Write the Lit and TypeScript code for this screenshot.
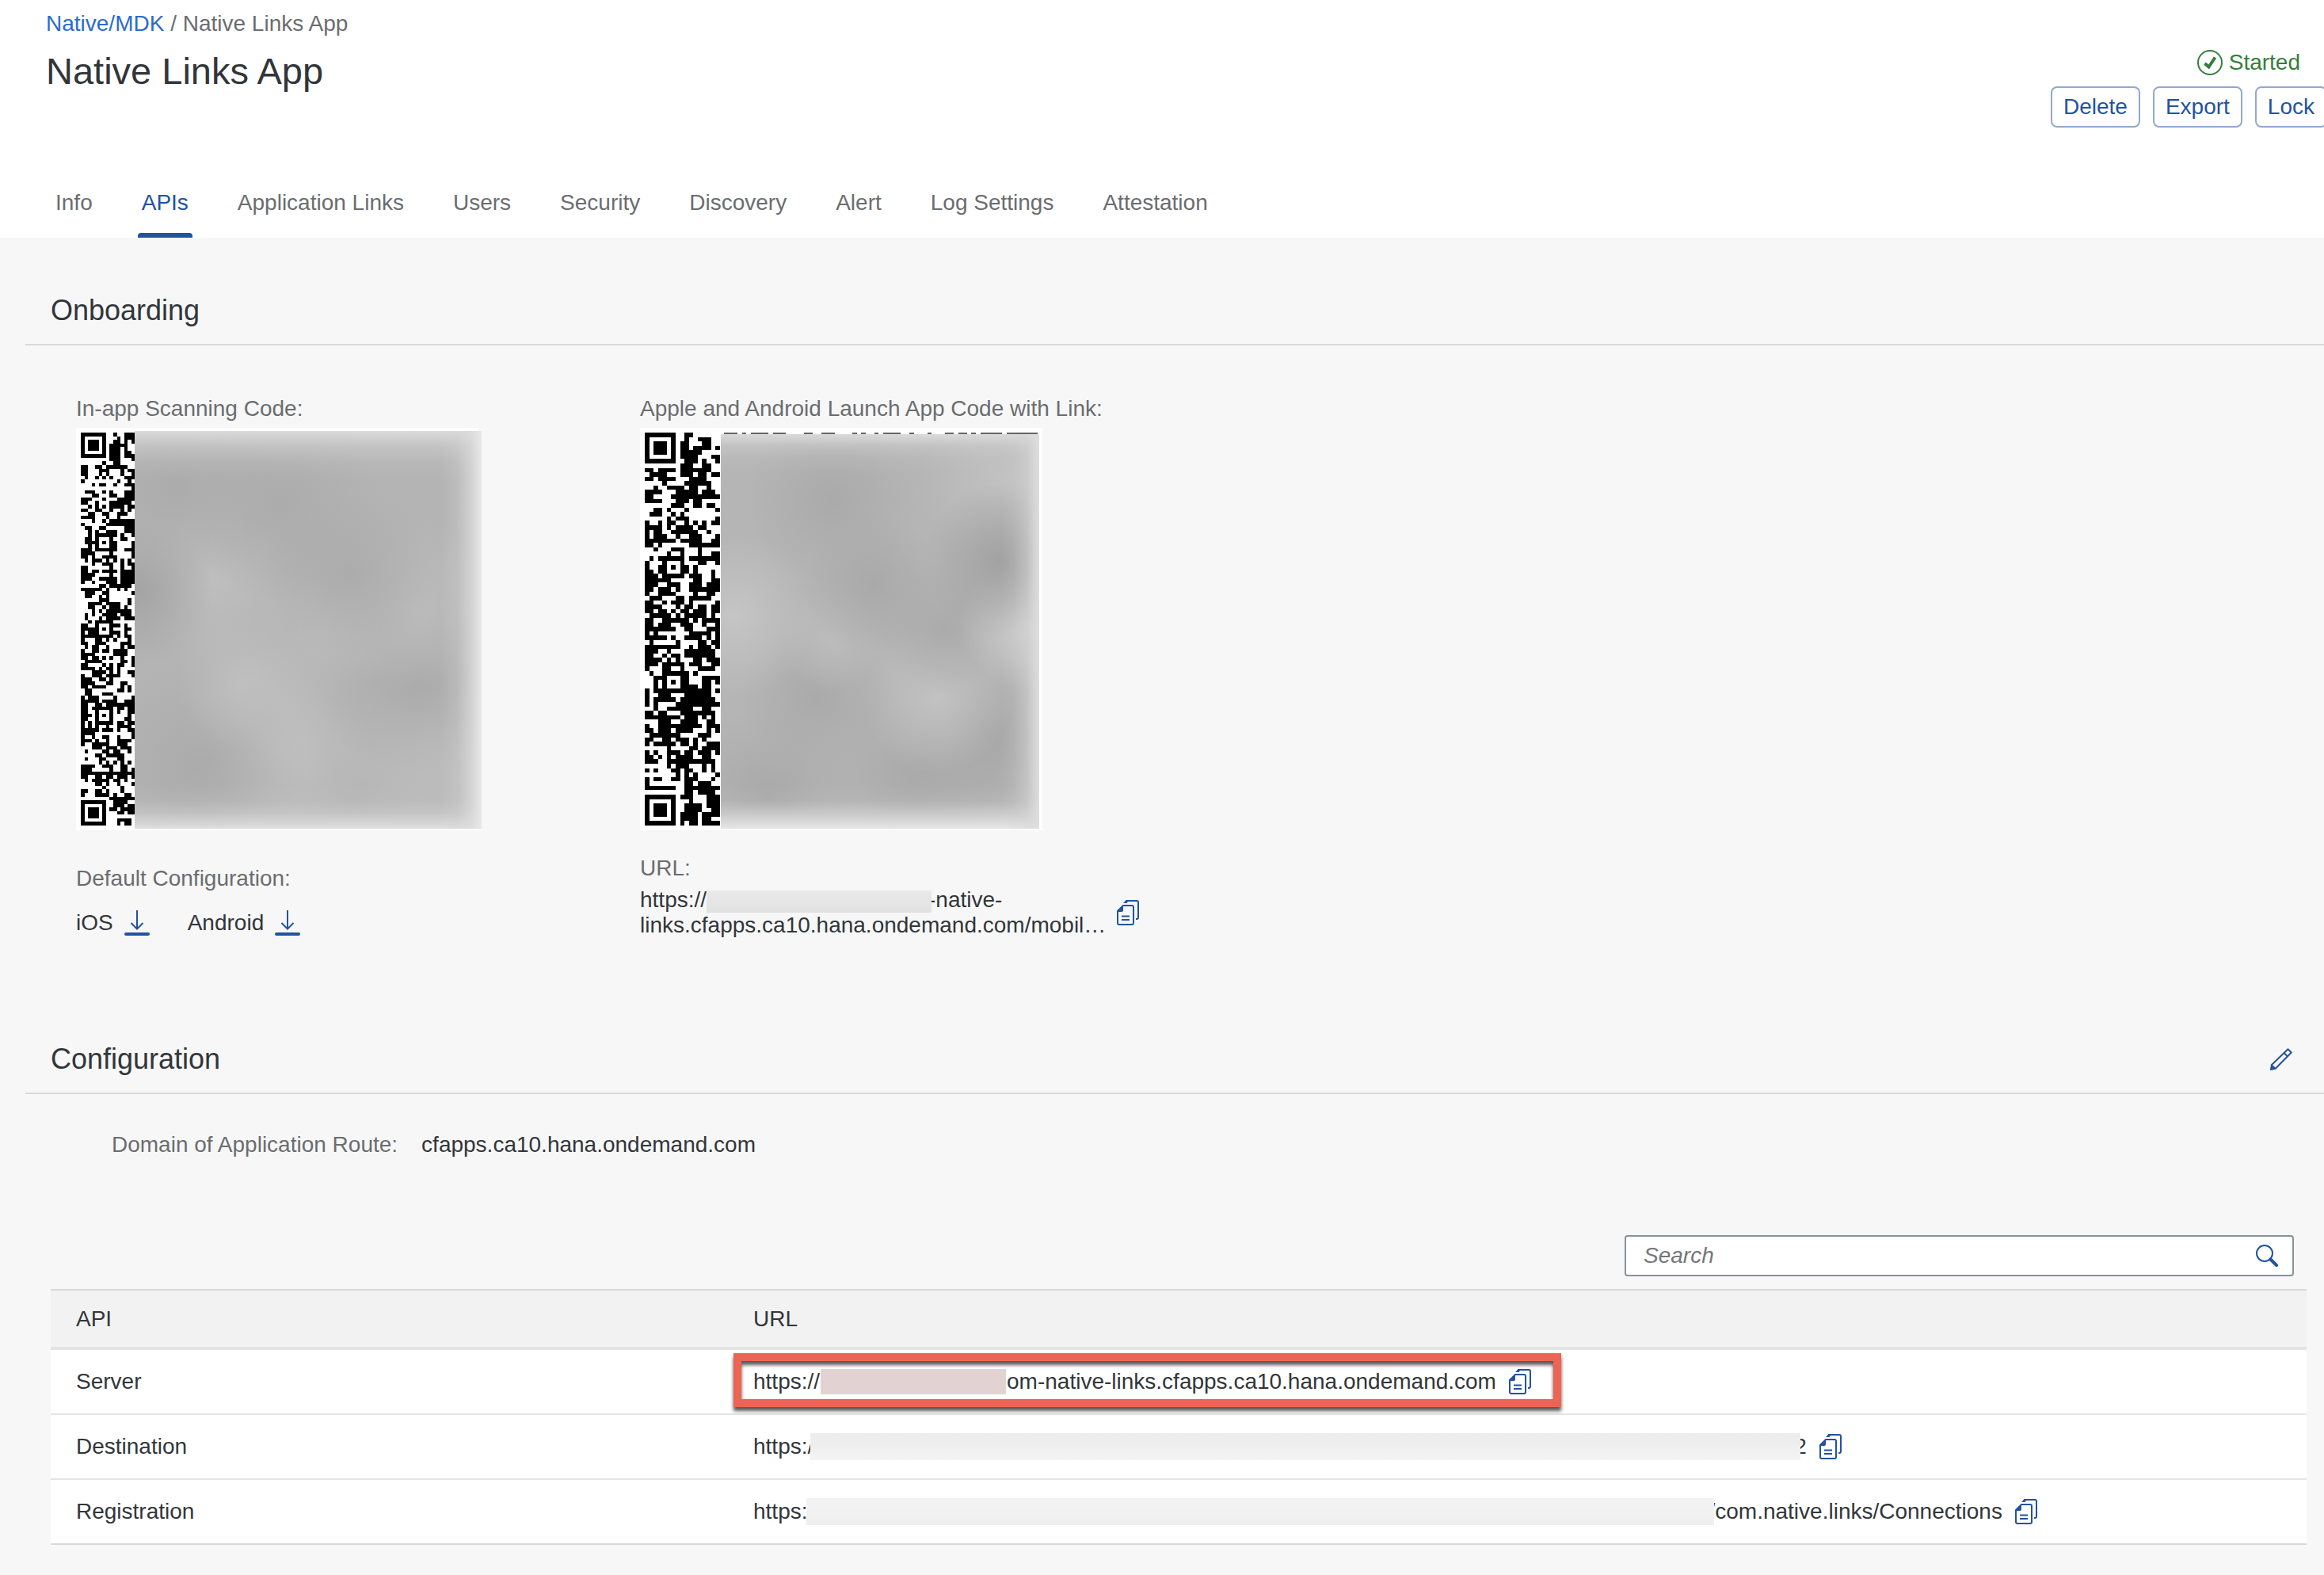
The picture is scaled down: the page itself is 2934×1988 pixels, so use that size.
import { LitElement, html, css, svg } from "lit";
import { customElement, property } from "lit/decorators.js";
import { classMap } from "lit/directives/class-map.js";

const copyIcon = html`<svg class="icon" width="28" height="32" viewBox="0 0 28 32" aria-hidden="true">
  <path d="M3 31h16a2 2 0 0 0 2-2V9a2 2 0 0 0-2-2H8l-7 7v15a2 2 0 0 0 2 2z" fill="none" stroke="currentColor" stroke-width="2"/>
  <path d="M1 15V14L8 6.500V13a2 2 0 0 1-2 2z" fill="currentColor"/>
  <path d="M6 20.500h10M6 25h10" stroke="currentColor" stroke-width="2"/>
  <path d="M11 2 12 1h13a2 2 0 0 1 2 2v19a2 2 0 0 1-2 2h-1" fill="none" stroke="currentColor" stroke-width="2"/>
  <path d="M8 4l4-4 2 2-1.500 2z" fill="currentColor"/>
</svg>`;

const downloadIcon = html`<svg class="icon" width="32" height="32" viewBox="0 0 32 32" aria-hidden="true">
  <path d="M16 0v23M8.500 16 16 23.500 23.500 16" fill="none" stroke="currentColor" stroke-width="2"/>
  <rect x="0" y="28" width="32" height="4" rx="2" fill="currentColor"/>
</svg>`;

const pencilIcon = html`<svg class="icon" width="28" height="28" viewBox="0 0 28 28" aria-hidden="true">
  <path d="M2 21 22.500 1.200 26.800 5.500 7 25.500 1.200 26.800z" fill="none" stroke="currentColor" stroke-width="2" stroke-linejoin="round"/>
  <path d="M17.500 6 22 10.500" stroke="currentColor" stroke-width="2"/>
  <path d="M0 28 1.500 20.500 4 22l2 2 1.500 2.500z" fill="currentColor"/>
</svg>`;

const searchIcon = html`<svg class="icon" width="28" height="28" viewBox="0 0 28 28" aria-hidden="true">
  <circle cx="11" cy="11" r="10" fill="none" stroke="currentColor" stroke-width="2"/>
  <path d="M18.500 18.500 26 26" stroke="currentColor" stroke-width="4" stroke-linecap="round"/>
</svg>`;

const startedIcon = html`<svg class="icon" width="32" height="32" viewBox="0 0 32 32" aria-hidden="true">
  <circle cx="16" cy="16" r="15" fill="none" stroke="currentColor" stroke-width="2"/>
  <path d="M9.500 17 14.500 21.500 22.500 9.500" fill="none" stroke="currentColor" stroke-width="4"/>
</svg>`;

/* Draws the left-hand columns of a QR symbol as one path. */
function qrPath(size: number, cols: number, centres: number[], seed: number): string {
  let state = seed;
  const next = () => {
    state = (Math.imul(state, 1664525) + 1013904223) >>> 0;
    return state / 4294967296;
  };
  const noise: boolean[][] = [];
  let d = "";
  for (let r = 0; r < size; r++) {
    noise.push([]);
    for (let c = 0; c < cols; c++) {
      const pick = next();
      let dark = next() < 0.52;
      if (pick < 0.16 && c > 0) dark = noise[r][c - 1];
      else if (pick < 0.34 && r > 0) dark = noise[r - 1][c];
      noise[r].push(dark);
      const fr = r < 8 ? r : r >= size - 8 ? size - 1 - r : -1;
      if (fr >= 0 && c < 8) {
        const ring = Math.max(Math.abs(fr - 3), Math.abs(c - 3));
        dark = ring !== 2 && ring !== 4;
      } else {
        if (c === 6) dark = r % 2 === 0;
        const centre = centres.find((y) => Math.abs(y - r) <= 2);
        if (centre !== undefined && Math.abs(c - 6) <= 2) {
          dark = Math.max(Math.abs(centre - r), Math.abs(c - 6)) !== 1;
        }
      }
      if (dark) d += `M${c} ${r}h1v1h-1z`;
    }
  }
  return d;
}

@customElement("qr-code")
class QrCode extends LitElement {
  @property({ type: Number }) size = 109;
  @property({ type: Number }) cols = 15;
  @property({ type: Number }) seed = 7;
  @property({ attribute: false }) centres: number[] = [];
  @property({ attribute: false }) topRuns: number[][] = [];

  static styles = css`
    :host { display: block; background: #fff; width: 508px; height: 508px; padding: 6px; box-sizing: border-box; }
    .symbol { display: block; width: 100%; height: 100%; }
  `;

  render() {
    return html`<svg class="symbol" viewBox="0 0 ${this.size} ${this.size}" shape-rendering="crispEdges" role="img" aria-label="QR code">
      <path d=${qrPath(this.size, this.cols, this.centres, this.seed)} fill="#000"/>
      ${this.topRuns.map(([x, w]) => svg`<rect x=${x} y="0" width=${w} height="1" fill="#666"/>`)}
    </svg>`;
  }
}

@customElement("app-root")
class AppRoot extends LitElement {
  static styles = css`
    :host {
      display: block;
      min-height: 100vh;
      overflow-x: hidden;
      background: #f7f7f7;
      color: #32363a;
      font: 28px/32px "Liberation Sans", Arial, sans-serif;
    }
    * { box-sizing: border-box; }
    h1, h2, p, dl, dd { margin: 0; font-weight: 400; }
    a { color: #22539f; text-decoration: none; }
    button { font: inherit; color: #22539f; background: none; border: 0; padding: 0; display: block; flex: none; }
    .icon { display: block; flex: none; }
    .label { color: #6a6d70; }

    .header { background: #fff; }
    .top { display: flex; justify-content: space-between; padding: 14px 0 0 58px; }
    .crumbs { color: #6a6d70; }
    .crumbs a { color: #2b6bcf; }
    .title { font-size: 47px; line-height: 56px; margin-top: 16px; }
    .side { padding-top: 49px; margin-right: -4px; }
    .status { display: flex; justify-content: flex-end; align-items: center; gap: 8px; color: #357e3c; padding-right: 34px; }
    .actions { display: flex; gap: 16px; margin-top: 14px; }
    .action { height: 52px; padding: 0 14px; border: 2px solid #91a9cf; border-radius: 8px; }
    .tabs { display: flex; gap: 48px; padding: 79px 0 0 63px; }
    .tab { color: #6a6d70; padding: 0 7px; }
    .tab::after { content: ""; display: block; height: 6px; margin: 22px -5px 0; border-radius: 4px 4px 0 0; }
    .current { color: #22539f; }
    .current::after { background: #22539f; }

    .heading { display: flex; justify-content: space-between; align-items: center; margin-left: 32px; padding: 70px 40px 20px 32px; border-bottom: 2px solid #d9d9d9; }
    .heading h2 { font-size: 36px; line-height: 44px; }
    .config { margin-top: 61px; }

    .onboarding { display: grid; grid-template-columns: 712px 1fr; padding: 64px 96px 0; }
    .code { position: relative; width: 508px; margin-top: 8px; }
    .smudge {
      position: absolute;
      background:
        linear-gradient(to left, #e8e8e8, rgba(222, 222, 222, 0.7) 3%, rgba(215, 215, 215, 0.25) 7%, rgba(210, 210, 210, 0) 12%),
        linear-gradient(to bottom, #dadada, rgba(210, 210, 210, 0.5) 4%, rgba(205, 205, 205, 0.15) 8%, rgba(200, 200, 200, 0) 12%),
        linear-gradient(to top, #dedede, rgba(210, 210, 210, 0.5) 4%, rgba(205, 205, 205, 0.15) 7%, rgba(200, 200, 200, 0) 11%),
        radial-gradient(circle at 12% 14%, #acacac, transparent 22%),
        radial-gradient(circle at 42% 18%, #acacac, transparent 26%),
        radial-gradient(circle at 62% 36%, #acacac, transparent 26%),
        radial-gradient(circle at 1% 40%, #a4a4a4, transparent 18%),
        radial-gradient(circle at 22% 36%, #bfbfbf, transparent 24%),
        radial-gradient(circle at 55% 49%, #bcbcbc, transparent 26%),
        radial-gradient(circle at 80% 44%, #bcbcbc, transparent 24%),
        radial-gradient(circle at 32% 63%, #bfbfbf, transparent 20%),
        radial-gradient(circle at 82% 62%, #aaaaaa, transparent 28%),
        radial-gradient(circle at 86% 78%, #c0c0c0, transparent 24%),
        radial-gradient(circle at 19% 84%, #ababab, transparent 24%),
        radial-gradient(circle at 40% 80%, #c2c2c2, transparent 26%),
        #b4b4b4;
    }
    .smudge.first { left: 74px; right: -4px; top: 4px; bottom: 2px; }
    .smudge.second {
      left: 102px; right: 4px; top: 8px; bottom: 2px;
      background:
        linear-gradient(to left, #dedede, rgba(215, 215, 215, 0.45) 4%, rgba(210, 210, 210, 0.15) 8%, rgba(205, 205, 205, 0) 12%),
        linear-gradient(to bottom, #dadada, rgba(210, 210, 210, 0.45) 3%, rgba(205, 205, 205, 0.15) 6%, rgba(200, 200, 200, 0) 10%),
        linear-gradient(to top, #e6e6e6, rgba(215, 215, 215, 0.6) 4%, rgba(205, 205, 205, 0.15) 7%, rgba(200, 200, 200, 0) 11%),
        radial-gradient(circle at 35% 17%, #aaaaaa, transparent 22%),
        radial-gradient(circle at 88% 32%, #a2a2a2, transparent 20%),
        radial-gradient(circle at 96% 48%, #cecece, transparent 18%),
        radial-gradient(circle at 90% 12%, #c2c2c2, transparent 20%),
        radial-gradient(circle at 48% 38%, #a9a9a9, transparent 24%),
        radial-gradient(circle at 70% 49%, #ababab, transparent 22%),
        radial-gradient(circle at 4% 46%, #c5c5c5, transparent 22%),
        radial-gradient(circle at 35% 52%, #bcbcbc, transparent 18%),
        radial-gradient(circle at 30% 67%, #aaaaaa, transparent 22%),
        radial-gradient(circle at 68% 67%, #c2c2c2, transparent 22%),
        radial-gradient(circle at 84% 76%, #a7a7a7, transparent 20%),
        radial-gradient(circle at 15% 92%, #a9a9a9, transparent 20%),
        radial-gradient(circle at 62% 86%, #aaaaaa, transparent 26%),
        #b5b5b5;
    }
    .default { margin-top: 45px; }
    .downloads { display: flex; align-items: center; gap: 48px; margin-top: 24px; }
    .download { display: flex; gap: 14px; }
    .link-label { margin-top: 32px; }
    .link { display: flex; align-items: center; gap: 14px; margin-top: 8px; white-space: nowrap; }
    .hidden { display: inline-block; vertical-align: top; position: relative; height: 28px; margin: 4px -4px 0 0; width: 284px; background: linear-gradient(#e9e9e9, #e1e1e1); }

    .route { display: flex; gap: 30px; padding: 48px 0 0 141px; }
    .search { display: flex; align-items: center; width: 845px; max-width: 100%; height: 52px; margin: 98px 38px 16px auto; padding: 0 18px 0 22px; background: #fff; border: 2px solid #89919a; border-radius: 4px; }
    .search input { flex: 1; min-width: 0; border: 0; outline: 0; padding: 0; background: none; font: inherit; color: #32363a; }
    .search input::placeholder { color: #74777a; font-style: italic; opacity: 1; }

    .table-area { padding: 0 22px 32px 64px; }
    table { width: 100%; border-collapse: separate; border-spacing: 0; background: #fff; }
    th, td { text-align: left; font-weight: 400; padding: 0 32px; vertical-align: middle; }
    th { height: 77px; background: #f2f2f2; border-top: 2px solid #d9d9d9; border-bottom: 4px solid #e4e4e4; }
    th:first-child { width: 855px; }
    td { height: 82px; border-bottom: 2px solid #e5e5e5; }
    tbody tr:last-child td { border-bottom-color: #d9d9d9; }
    .url { display: flex; align-items: center; position: relative; width: max-content; white-space: nowrap; }
    .url button { margin-left: 16px; }
    .mask { position: relative; height: 34px; background: linear-gradient(#ececec, #f3f3f3); }
    .mask.server { width: 234px; height: 32px; margin: 0 1px; background: #e2d3d2; }
    .mask.destination { width: 1250px; margin: 0 -8px 0 -4px; }
    .mask.registration { width: 1146px; margin: 0 -7px 0 -1px; background: linear-gradient(#f3f3f3, #efefef); }
    .marker { position: absolute; top: -20px; bottom: -16px; left: -25px; right: -38px; border: 10px solid #ec6453; filter: drop-shadow(0 5px 2px rgba(0, 0, 0, 0.65)); pointer-events: none; }
  `;

  private tabs = ["Info", "APIs", "Application Links", "Users", "Security", "Discovery", "Alert", "Log Settings", "Attestation"];

  private rows = [
    { api: "Server", start: "https://", mask: "server", end: "om-native-links.cfapps.ca10.hana.ondemand.com", marked: true },
    { api: "Destination", start: "https:/", mask: "destination", end: "2", marked: false },
    { api: "Registration", start: "https:", mask: "registration", end: "/com.native.links/Connections", marked: false },
  ];

  render() {
    return html`
      <header class="header">
        <div class="top">
          <div>
            <nav class="crumbs" aria-label="Breadcrumb"><a href="#">Native/MDK</a> / Native Links App</nav>
            <h1 class="title">Native Links App</h1>
          </div>
          <div class="side">
            <div class="status">${startedIcon}<span>Started</span></div>
            <div class="actions">
              ${["Delete", "Export", "Lock"].map((t) => html`<button class="action" type="button">${t}</button>`)}
            </div>
          </div>
        </div>
        <nav class="tabs" aria-label="Sections">
          ${this.tabs.map((t) => html`<a href="#" class=${classMap({ tab: true, current: t === "APIs" })}>${t}</a>`)}
        </nav>
      </header>
      <main>
        <section>
          <div class="heading"><h2>Onboarding</h2></div>
          <div class="onboarding">
            <div>
              <p class="label">In-app Scanning Code:</p>
              <div class="code">
                <qr-code .size=${109} .cols=${15} .seed=${91} .centres=${[30, 54, 78]}></qr-code>
                <div class="smudge first"></div>
              </div>
              <p class="label default">Default Configuration:</p>
              <div class="downloads">
                <span class="download">iOS<a href="#" aria-label="Download iOS configuration">${downloadIcon}</a></span>
                <span class="download">Android<a href="#" aria-label="Download Android configuration">${downloadIcon}</a></span>
              </div>
            </div>
            <div>
              <p class="label">Apple and Android Launch App Code with Link:</p>
              <div class="code">
                <qr-code .size=${89} .cols=${17} .seed=${37} .centres=${[30, 56]}
                  .topRuns=${[[18, 3], [22, 1], [24, 4], [29, 3], [36, 2], [40, 3], [47, 1], [49, 1], [52, 1], [54, 4], [60, 1], [64, 1], [68, 2], [71, 2], [74, 1], [76, 5], [82, 7]]}></qr-code>
                <div class="smudge second"></div>
              </div>
              <p class="label link-label">URL:</p>
              <div class="link">
                <p>https://<span class="hidden"></span>-native-<br>links.cfapps.ca10.hana.ondemand.com/mobil…</p>
                <button type="button" aria-label="Copy link URL">${copyIcon}</button>
              </div>
            </div>
          </div>
        </section>
        <section class="config">
          <div class="heading">
            <h2>Configuration</h2>
            <button type="button" aria-label="Edit configuration">${pencilIcon}</button>
          </div>
          <dl class="route">
            <dt class="label">Domain of Application Route:</dt>
            <dd>cfapps.ca10.hana.ondemand.com</dd>
          </dl>
          <form class="search" role="search">
            <input type="text" placeholder="Search" aria-label="Search">
            <button type="button" aria-label="Run search">${searchIcon}</button>
          </form>
          <div class="table-area">
            <table>
              <thead><tr><th scope="col">API</th><th scope="col">URL</th></tr></thead>
              <tbody>
                ${this.rows.map((r) => html`<tr>
                  <td>${r.api}</td>
                  <td>
                    <div class="url">
                      <span>${r.start}</span><span class="mask ${r.mask}"></span><span>${r.end}</span>
                      <button type="button" aria-label="Copy ${r.api} URL">${copyIcon}</button>
                      ${r.marked ? html`<div class="marker"></div>` : null}
                    </div>
                  </td>
                </tr>`)}
              </tbody>
            </table>
          </div>
        </section>
      </main>
    `;
  }
}
